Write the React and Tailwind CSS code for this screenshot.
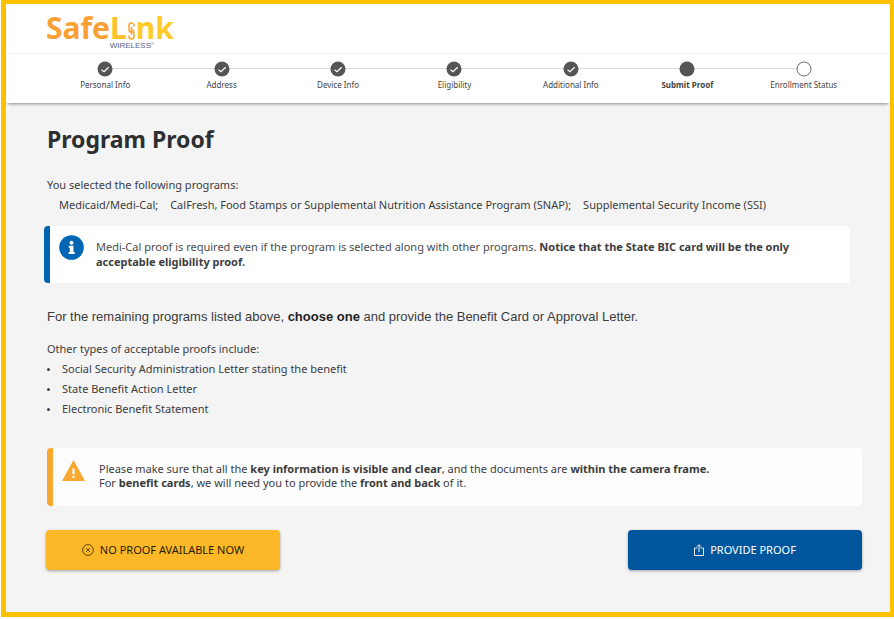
import React from 'react';

const steps = [
  { label: 'Personal Info', status: 'done' },
  { label: 'Address', status: 'done' },
  { label: 'Device Info', status: 'done' },
  { label: 'Eligibility', status: 'done' },
  { label: 'Additional Info', status: 'done' },
  { label: 'Submit Proof', status: 'current' },
  { label: 'Enrollment Status', status: 'pending' }
];

const programs = [
  'Medicaid/Medi-Cal;',
  'CalFresh, Food Stamps or Supplemental Nutrition Assistance Program (SNAP);',
  'Supplemental Security Income (SSI)'
];

const proofs = [
  'Social Security Administration Letter stating the benefit',
  'State Benefit Action Letter',
  'Electronic Benefit Statement'
];

// Chain link that stands in for the letter "i"
const ChainLink = () => (
  <svg className="w-[9px] h-[18px] mb-0.5" viewBox="0 0 9 18" fill="none" stroke="#fba62c" strokeWidth="1.5" aria-hidden="true">
    <path d="M7 4.500V3.500a2.500 2.500 0 0 0-5 0v3.500a2.500 2.500 0 0 0 2.500 2.500A2.500 2.500 0 0 1 7 12v2.500a2.500 2.500 0 0 1-5 0v-1" />
    <path d="M4.500 5v2.500A2.500 2.500 0 0 1 7 9.500M4.500 13v-2.500A2.500 2.500 0 0 1 2 9" />
  </svg>
);

const Logo = () => (
  <a href="#" className="inline-flex flex-col" aria-label="SafeLink Wireless">
    <span className="flex items-end font-bold text-[30px] leading-7">
      <span className="text-[#f9a134]">Safe</span>
      <span className="text-[#ffc02a]">L</span>
      <ChainLink />
      <span className="text-[#ffcb2b]">nk</span>
    </span>
    <span className="flex justify-end pr-5 font-['Liberation_Sans_Narrow','Liberation_Sans',sans-serif] text-[8px] leading-2 text-[#5d5f86]">
      WIRELESS
      <span className="text-[4px] leading-1">®</span>
    </span>
  </a>
);

const StepIcon = ({ status }) => (
  <svg className="relative w-4 h-4" viewBox="0 0 16 16" aria-hidden="true">
    {status === 'pending' ? (
      <circle cx="8" cy="8" r="7" fill="#fff" stroke="#6a6a6a" strokeWidth="1" />
    ) : (
      <circle cx="8" cy="8" r="7.500" fill="#555" />
    )}
    {status === 'done' && (
      <path d="M4.500 8.800l2.500 2L11.700 6.200" fill="none" stroke="#fff" strokeWidth="1.200" />
    )}
  </svg>
);

const Stepper = () => (
  <ol className="flex pt-[7px] pb-3">
    {steps.map((step, index) => (
      <li key={step.label} className="relative flex-1 flex flex-col items-center gap-0.5">
        {index < steps.length - 1 && (
          <span className="absolute left-1/2 top-[7px] w-full h-px bg-[#dcdcdc]"></span>
        )}
        <StepIcon status={step.status} />
        <span
          className={`text-[8px] leading-3 whitespace-nowrap text-[#444] ${
            step.status === 'current' ? 'font-bold' : ''
          }`}
        >
          {step.label}
        </span>
      </li>
    ))}
  </ol>
);

const InfoIcon = () => (
  <svg className="w-[25px] h-[25px] shrink-0" viewBox="0 0 25 25" aria-hidden="true">
    <circle cx="12.500" cy="12.500" r="12.300" fill="#0066b3" />
    <circle cx="12.500" cy="7.800" r="2" fill="#fff" />
    <path d="M9.800 10.800h4.700v6.200h1.200v2H9.600v-2h1.200v-4.200h-1z" fill="#fff" />
  </svg>
);

const WarningIcon = () => (
  <svg className="w-[23px] h-[21px] shrink-0" viewBox="0 0 23 21" aria-hidden="true">
    <path d="M11.500 0L23 21H0z" fill="#f9a82f" />
    <path d="M10.400 8.500h2.200v6h-2.200zM10.400 16h2.200v2h-2.200z" fill="#fff" />
  </svg>
);

const CancelIcon = () => (
  <svg className="w-3 h-3" viewBox="0 0 12 12" fill="none" stroke="currentColor" strokeWidth="0.700" aria-hidden="true">
    <circle cx="6" cy="6" r="5.400" />
    <path d="M4 4l4 4M8 4l-4 4" />
  </svg>
);

const ShareIcon = () => (
  <svg className="w-[10px] h-3" viewBox="0 0 10 12" fill="none" stroke="currentColor" strokeWidth="0.900" aria-hidden="true">
    <path d="M3.500 4H.5v7.500h9V4h-3M5 8V.8M3 2.700L5 .7l2 2" />
  </svg>
);

export default function App() {
  return (
    <div className="min-h-screen flex bg-white pl-px pb-0.5 font-['Noto_Sans','Open_Sans',sans-serif] text-[11px] text-[#3c3c3c]">
      <div className="flex-1 border-[#ffc000] border-t-4 border-b-5 border-l-5 border-r-4 bg-[#f4f4f4]">
        <header className="bg-white shadow-[0_3px_3px_-2px_rgba(0,0,0,0.45)]">
          <div className="h-[50px] border-b border-[#f4f4f4] pl-10 pt-[10px]">
            <Logo />
          </div>
          <nav className="pl-[41px] pr-7" aria-label="Enrollment progress">
            <Stepper />
          </nav>
        </header>

        <main className="pl-[41px] pr-7 pt-5">
          <h1 className="text-[23px] leading-8 font-bold text-[#2d2f30]">Program Proof</h1>

          <p className="mt-5 leading-5">You selected the following programs:</p>
          <ul className="flex flex-wrap gap-x-3 pl-3 leading-5">
            {programs.map((program) => (
              <li key={program}>{program}</li>
            ))}
          </ul>

          <section className="mt-[11px] mr-3 -ml-[3px] h-[57px] flex gap-3 rounded-sm border-l-6 border-[#0066b3] bg-white pl-[9px] pr-12 pt-[9px]">
            <InfoIcon />
            <p className="pt-1 leading-[15px] text-[#4c4c4c]">
              Medi-Cal proof is required even if the program is selected along with other programs.{' '}
              <strong className="text-[#3d3d3d]">
                Notice that the State BIC card will be the only acceptable eligibility proof.
              </strong>
            </p>
          </section>

          <p className="mt-6 font-['Liberation_Sans',Arial,sans-serif] text-[13px] leading-5">
            For the remaining programs listed above, <strong className="text-[#1f1f1f]">choose one</strong> and
            provide the Benefit Card or Approval Letter.
          </p>

          <p className="mt-3 leading-5">Other types of acceptable proofs include:</p>
          <ul className="leading-5">
            {proofs.map((proof) => (
              <li key={proof} className="flex items-center gap-3">
                <span className="w-[3px] h-[3px] rounded-full bg-[#444]"></span>
                {proof}
              </li>
            ))}
          </ul>

          <section className="mt-[29px] h-[58px] flex gap-[14px] rounded-sm border-l-6 border-[#f9a82f] bg-[#fdfdfd] pl-[9px] pt-3">
            <WarningIcon />
            <p className="pt-0.5 leading-[14px]">
              Please make sure that all the <strong>key information is visible and clear</strong>, and the documents
              are <strong>within the camera frame.</strong>
              <br />
              For <strong>benefit cards</strong>, we will need you to provide the <strong>front and back</strong> of it.
            </p>
          </section>

          <div className="mt-6 -ml-px flex justify-between">
            <button className="w-[234px] h-10 flex items-center justify-center gap-1.5 rounded bg-[#fdb827] text-[#1f1a0a] shadow-[0_1px_3px_rgba(0,0,0,0.35)]">
              <CancelIcon />
              NO PROOF AVAILABLE NOW
            </button>
            <button className="w-[234px] h-10 flex items-center justify-center gap-1.5 rounded bg-[#00569c] text-white shadow-[0_1px_3px_rgba(0,0,0,0.35)]">
              <ShareIcon />
              PROVIDE PROOF
            </button>
          </div>
        </main>
      </div>
    </div>
  );
}
